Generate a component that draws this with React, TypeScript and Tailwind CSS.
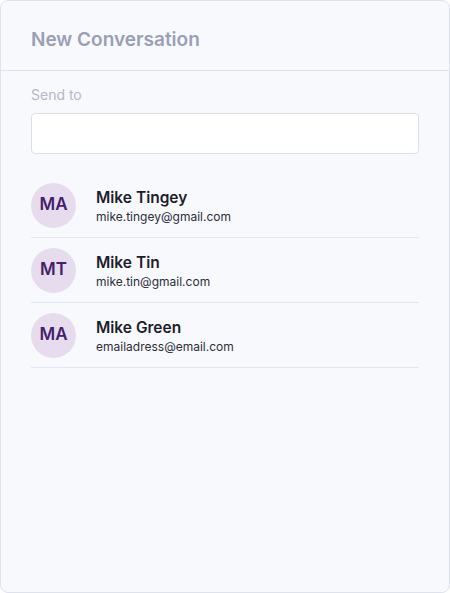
import React from 'react';

const contacts = [
  { initials: 'MA', name: 'Mike Tingey', email: 'mike.tingey@gmail.com' },
  { initials: 'MT', name: 'Mike Tin', email: 'mike.tin@gmail.com' },
  { initials: 'MA', name: 'Mike Green', email: 'emailadress@email.com' },
];

export default function App() {
  return (
    <div className="w-[450px] h-[593px] bg-white" style={{ fontFamily: 'Inter, "Noto Sans", sans-serif' }}>
      <div className="w-full h-full flex flex-col bg-[#f8f9fd] border border-[#dfe1ef] rounded-lg">
        {/* Header */}
        <div className="h-[70px] border-b border-[#dfe1ef] px-[30px] flex items-center">
          <h1 className="text-[19px] font-semibold text-[#9a9fb6] mt-[10px]">New Conversation</h1>
        </div>

        {/* Body */}
        <div className="px-[30px] pt-[14px]">
          <label className="block text-[14px] text-[#b3b7ca] leading-[20px]">Send to</label>
          <input
            type="text"
            className="mt-[8px] w-full h-[41px] bg-white border border-[#dcdfe8] rounded-[4px] px-3 outline-none"
          />

          <div className="mt-[19px]">
            {contacts.map((c, i) => (
              <div key={i} className="h-[65px] flex items-center gap-[20px] border-b border-[#e3e6ee]">
                <div className="w-[45px] h-[45px] rounded-full bg-[#e6dcee] flex items-center justify-center text-[17px] font-semibold text-[#45206c]">
                  {c.initials}
                </div>
                <div className="flex flex-col pt-[3px]">
                  <span className="text-[15.5px] font-semibold text-[#1d1d2b] leading-[20px]">{c.name}</span>
                  <span className="text-[12px] text-[#2d2d3a] leading-[18px]">{c.email}</span>
                </div>
              </div>
            ))}
          </div>
        </div>
      </div>
    </div>
  );
}
